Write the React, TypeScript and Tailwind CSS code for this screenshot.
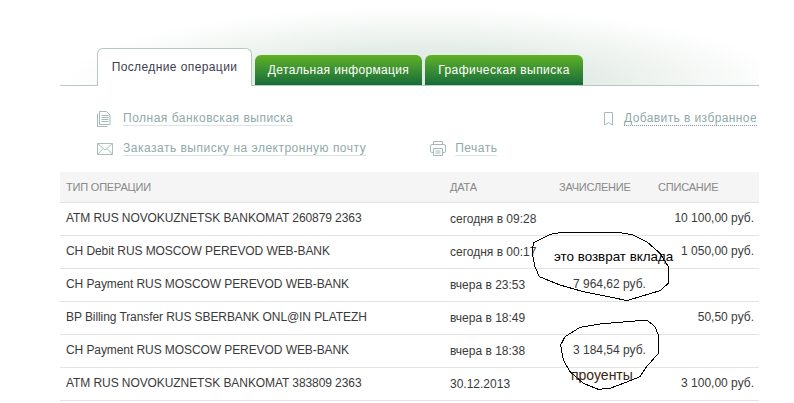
import React from "react";

const rows = [
  { type: "ATM RUS NOVOKUZNETSK BANKOMAT 260879 2363", date: "сегодня в 09:28", credit: "", debit: "10 100,00 руб." },
  { type: "CH Debit RUS MOSCOW PEREVOD WEB-BANK", date: "сегодня в 00:17", credit: "", debit: "1 050,00 руб." },
  { type: "CH Payment RUS MOSCOW PEREVOD WEB-BANK", date: "вчера в 23:53", credit: "7 964,62 руб.", debit: "" },
  { type: "BP Billing Transfer RUS SBERBANK ONL@IN PLATEZH", date: "вчера в 18:49", credit: "", debit: "50,50 руб." },
  { type: "CH Payment RUS MOSCOW PEREVOD WEB-BANK", date: "вчера в 18:38", credit: "3 184,54 руб.", debit: "" },
  { type: "ATM RUS NOVOKUZNETSK BANKOMAT 383809 2363", date: "30.12.2013", credit: "", debit: "3 100,00 руб." },
];

function DocIcon() {
  return (
    <svg width="14" height="16" viewBox="0 0 14 16" fill="none" stroke="#a3bbb7" strokeWidth="1">
      <path d="M2.5.5h7l3.5 3.5v9.5H2.5z" />
      <path d="M.5 2.5v13h10" />
      <path d="M4.5 4.5h7M4.5 6.5h7M4.5 8.5h7M4.5 10.5h7" />
    </svg>
  );
}

function MailIcon() {
  return (
    <svg width="16" height="12" viewBox="0 0 16 12" fill="none" stroke="#a9c0bc" strokeWidth="1">
      <path d="M.5.5h15v11H.5z" />
      <path d="M.5.5 8 7l7.5-6.5M.5 11.5 6 5.5M15.5 11.5 10 5.5" />
    </svg>
  );
}

function PrintIcon() {
  return (
    <svg width="16" height="15" viewBox="0 0 16 15" fill="none" stroke="#a3bbb7" strokeWidth="1">
      <path d="M3.5 3.5v-3h9v3" />
      <path d="M3.5 11.5H2A1.5 1.5 0 0 1 .5 10V5A1.5 1.5 0 0 1 2 3.5h12A1.5 1.5 0 0 1 15.5 5v5a1.5 1.5 0 0 1-1.5 1.5h-1.5" />
      <path d="M3.5 7.5h9v7h-9zM5.5 10h5M5.5 12h5" />
    </svg>
  );
}

function BookmarkIcon() {
  return (
    <svg width="10" height="14" viewBox="0 0 10 14" fill="none" stroke="#a3bbb7" strokeWidth="1">
      <path d="M.5.5h8v12.5l-4-2.5-4 2.5z" />
    </svg>
  );
}

function DocLink({ children }: { children: React.ReactNode }) {
  return <a className="border-b border-[#dbe5e3] leading-[14px] tracking-[0.5px] text-[#8fa9a9]">{children}</a>;
}

export default function App() {
  return (
    <div className="relative h-[403px] w-[794px] overflow-hidden bg-white font-['Liberation_Sans',Arial,sans-serif] text-xs text-[#3a3a3a]">
      <div className="ml-[60px] w-[699px]">
        <div className="flex h-[86px] items-end gap-[3px] border-b border-[#b5cac3] bg-[radial-gradient(ellipse_52%_92%_at_52%_100%,#dfe9e3_0%,#e4ece7_45%,#f2f6f3_72%,#ffffff_100%)] pl-[37px]">
          <div className="-mb-px flex h-[38px] w-[155px] items-center justify-center rounded-t-md border border-b-0 border-[#b5cac3] bg-white pb-[2px] tracking-[0.4px] text-[#3d3d4d]">
            Последние операции
          </div>
          <div className="flex h-[30px] w-[167px] items-center justify-center rounded-t-md bg-gradient-to-b from-[#5fb31f] to-[#146c37] tracking-[0.35px] text-white">
            Детальная информация
          </div>
          <div className="flex h-[30px] w-[158px] items-center justify-center rounded-t-md bg-gradient-to-b from-[#5fb31f] to-[#146c37] tracking-[0.45px] text-white">
            Графическая выписка
          </div>
        </div>

        <div className="flex h-[86px] flex-col gap-[15px] pt-[25px]">
          <div className="flex h-[15px] items-center pl-[37px]">
            <div className="flex w-[26px] items-center"><DocIcon /></div>
            <DocLink>Полная банковская выписка</DocLink>
            <div className="ml-auto flex items-center gap-[10px] pr-[2px]">
              <BookmarkIcon />
              <a className="border-b border-dotted border-[#7f9f9f] leading-[14px] tracking-[0.4px] text-[#8fa9a9]">Добавить в избранное</a>
            </div>
          </div>
          <div className="flex h-[15px] items-center pl-[37px]">
            <div className="flex w-[26px] items-center"><MailIcon /></div>
            <DocLink>Заказать выписку на электронную почту</DocLink>
            <div className="ml-[64px] flex items-center gap-[9px]">
              <PrintIcon />
              <DocLink>Печать</DocLink>
            </div>
          </div>
        </div>

        <div className="grid h-[31px] grid-cols-[384px_109px_99px_1fr] items-center border-b border-[#e3e3e3] bg-[#f5f5f5] pl-[6px] text-[11px] tracking-[-0.2px] text-[#888]">
          <span>ТИП ОПЕРАЦИИ</span>
          <span>ДАТА</span>
          <span>ЗАЧИСЛЕНИЕ</span>
          <span>СПИСАНИЕ</span>
        </div>
        {rows.map((row, i) => (
          <div key={i} className="grid h-[33px] grid-cols-[384px_109px_1fr_auto] items-start border-b border-[#e3e3e3] pr-[5px] pl-[6px]">
            <span className="pt-[7px] tracking-[-0.08px]">{row.type}</span>
            <span className="pt-[8px]">{row.date}</span>
            <span className="pt-[7px] pl-[14px]">{row.credit}</span>
            <span className="pt-[7px]">{row.debit}</span>
          </div>
        ))}
      </div>

      {/* ручные пометки поверх таблицы */}
      <svg className="absolute top-[220px] left-[500px]" width="200" height="183" viewBox="0 0 600 549" fill="none" stroke="#000" strokeWidth="3" shapeRendering="crispEdges">
        <path d="M100 68 150 43 190 36H350L400 45 440 65 480 100 505 140V190L480 212 420 230 380 242 350 235 250 215 180 195 118 170 105 140 97 100Z" />
        <path d="M240 322 300 312 380 305 440 300 465 320 475 345V400L440 440 420 470 370 490 330 505 295 508 250 490 210 455 190 420 182 375 195 350Z" />
      </svg>
      <span className="absolute top-[249px] left-[554px] text-[13.4px] leading-[15px] text-black">это возврат вклада</span>
      <span className="absolute top-[368px] left-[571px] text-[14px] leading-[15px] text-[#3a2410]">проуенты</span>
    </div>
  );
}
